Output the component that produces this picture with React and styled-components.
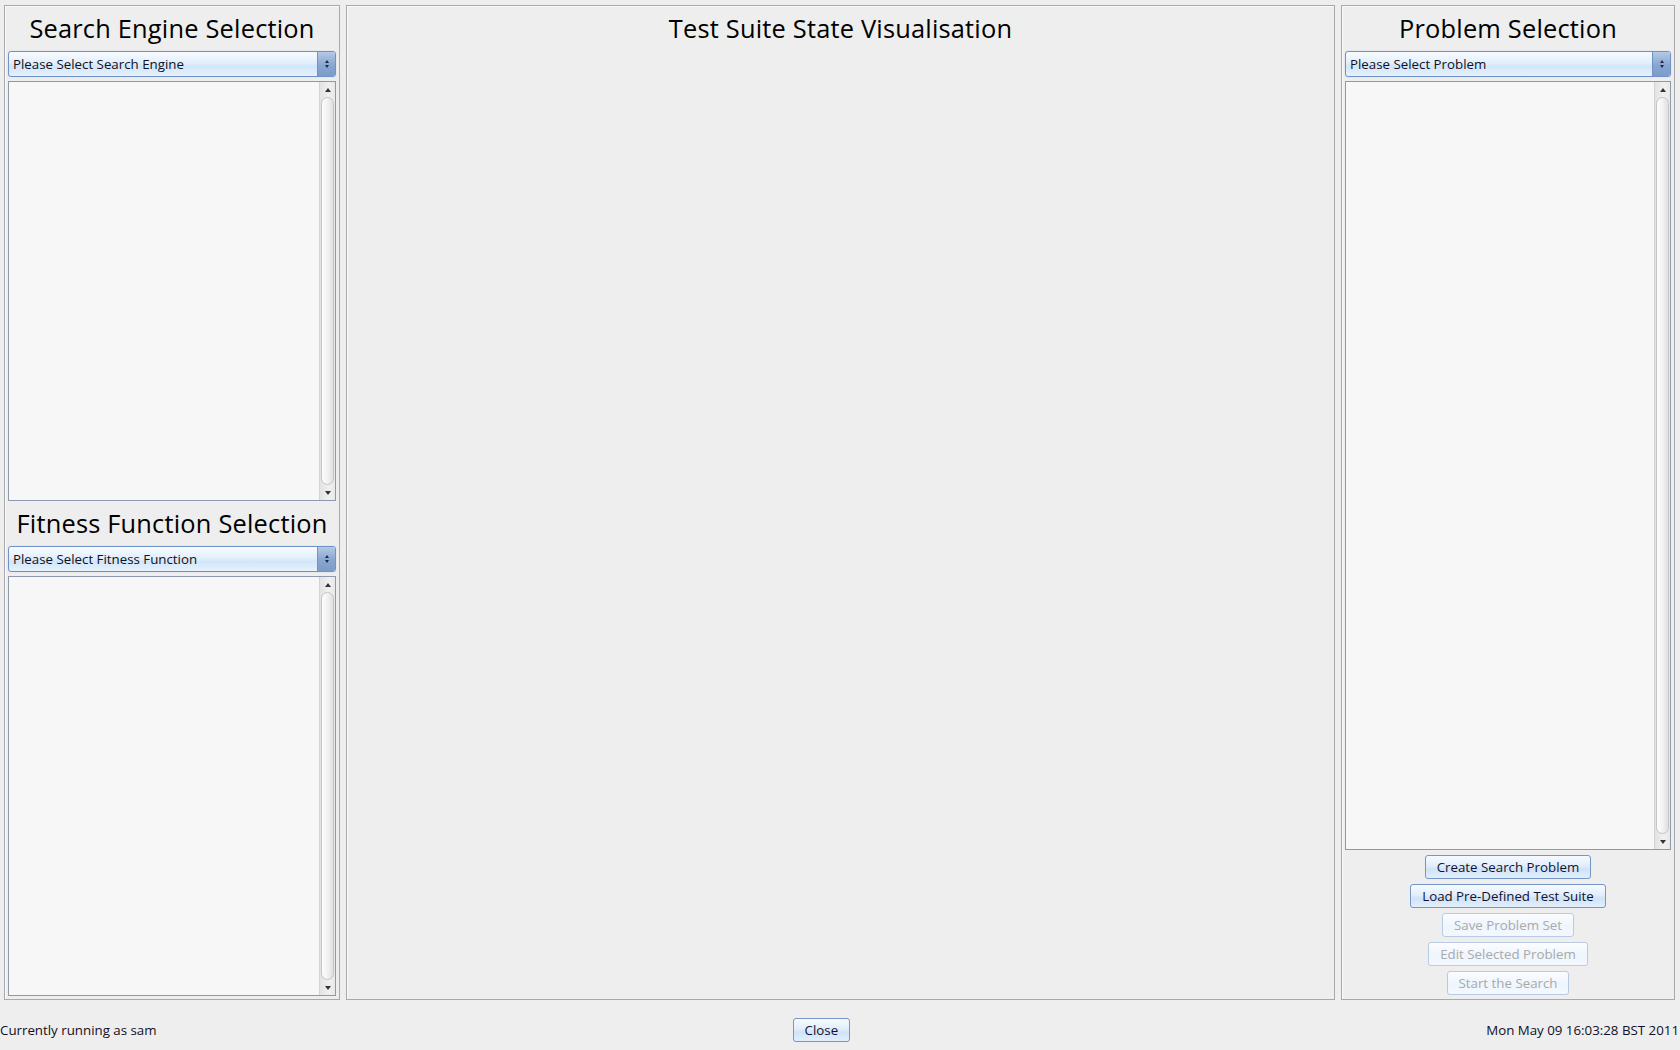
import React from "react";
import styled, { createGlobalStyle } from "styled-components";

const Global = createGlobalStyle`
  html, body {
    margin: 0;
    padding: 0;
    background: #eeeeee;
  }
  body {
    font-family: "Open Sans", "DejaVu Sans", sans-serif;
    color: #111;
  }
`;

const Page = styled.div`
  width: 1680px;
  height: 1050px;
  display: flex;
  flex-direction: column;
  box-sizing: border-box;
  padding: 5px 5px 0 4px;
`;

const Main = styled.div`
  display: flex;
  gap: 6px;
  height: 995px;
`;

const Panel = styled.div`
  display: flex;
  flex-direction: column;
  box-sizing: border-box;
  border: 1px solid #a9a9a9;
  box-shadow: inset 1px 1px 0 #fafafa;
  padding: 0 3px 3px 3px;
  width: ${(p) => (p.$grow ? "auto" : `${p.$w || 336}px`)};
  flex: ${(p) => (p.$grow ? "1" : "none")};
`;

const Section = styled.div`
  flex: 1;
  display: flex;
  flex-direction: column;
  min-height: 0;
`;

const Title = styled.div`
  height: 45px;
  line-height: 45px;
  text-align: center;
  font-size: 25.4px;
  color: #000;
  letter-spacing: 0.2px;
`;

const Combo = styled.div`
  height: 26px;
  display: flex;
  box-sizing: border-box;
  border: 1px solid #6f93c8;
  border-radius: 3px;
  background: linear-gradient(#f7fbff 0%, #e3effc 45%, #d2e6f9 60%, #e6f1fc 100%);
  box-shadow: 0 0 1px #9fb9de;
  margin-bottom: 4px;
  overflow: hidden;
`;

const ComboText = styled.div`
  flex: 1;
  padding-left: 4px;
  font-size: 13.3px;
  line-height: 25px;
  color: #101020;
`;

const ComboArrow = styled.div`
  width: 17px;
  border-left: 1px solid #6f93c8;
  background: linear-gradient(#b4c9e4, #88a6d0 55%, #7c9cc9);
  display: flex;
  flex-direction: column;
  align-items: center;
  justify-content: center;
  gap: 2px;
`;

const Tri = styled.span`
  width: 0;
  height: 0;
  border-left: ${(p) => p.$w || 3}px solid transparent;
  border-right: ${(p) => p.$w || 3}px solid transparent;
  ${(p) =>
    p.$down
      ? `border-top: ${p.$h || 3}px solid ${p.$c || "#1e2a44"};`
      : `border-bottom: ${p.$h || 3}px solid ${p.$c || "#1e2a44"};`}
`;

const List = styled.div`
  flex: 1;
  display: flex;
  box-sizing: border-box;
  border: 1px solid #8d99ad;
  background: #f7f7f7;
  min-height: 0;
`;

const ListBody = styled.div`
  flex: 1;
`;

const Scroll = styled.div`
  width: 15px;
  display: flex;
  flex-direction: column;
  background: linear-gradient(to right, #e3e3e3, #f0f0f0 60%, #e8e8e8);
  border-left: 1px solid #d3d3d3;
`;

const ScrollBtn = styled.div`
  height: 15px;
  display: flex;
  align-items: center;
  justify-content: center;
  flex: none;
`;

const Thumb = styled.div`
  flex: 1;
  margin: 0 1px;
  border: 1px solid #c4c4c4;
  border-radius: 7px;
  background: linear-gradient(to right, #fdfdfd, #f2f2f2 50%, #e0e0e0);
`;

const ButtonColumn = styled.div`
  display: flex;
  flex-direction: column;
  align-items: center;
  gap: 5px;
  padding: 5px 0 1px;
`;

const Button = styled.div`
  height: 24px;
  box-sizing: border-box;
  padding: 0 ${(p) => p.$pad || 11}px;
  border: 1px solid ${(p) => (p.$disabled ? "#b9cbe4" : "#7596c6")};
  border-radius: 3px;
  font-size: 13.3px;
  line-height: 22px;
  color: ${(p) => (p.$disabled ? "#a9a9a9" : "#121230")};
  background: ${(p) =>
    p.$disabled
      ? "linear-gradient(#fbfdff, #eef5fd 55%, #f4f8fe)"
      : "linear-gradient(#f6faff, #e2eefb 45%, #cfe3f8 60%, #e3effb)"};
  white-space: nowrap;
`;

const Footer = styled.div`
  flex: 1;
  display: flex;
  justify-content: space-between;
  align-items: center;
  padding: 10px 1px 0 0;
  margin: 0 -5px 0 -4px;
  font-size: 13.3px;
  color: #101028;
`;

function Scrollbar() {
  return (
    <Scroll>
      <ScrollBtn>
        <Tri $w={3} $h={4} $c="#333" />
      </ScrollBtn>
      <Thumb />
      <ScrollBtn>
        <Tri $down $w={3} $h={4} $c="#333" />
      </ScrollBtn>
    </Scroll>
  );
}

function Selector({ title, placeholder }) {
  return (
    <>
      <Title>{title}</Title>
      <Combo>
        <ComboText>{placeholder}</ComboText>
        <ComboArrow>
          <Tri $w={2.5} $h={3} />
          <Tri $down $w={2.5} $h={3} />
        </ComboArrow>
      </Combo>
      <List>
        <ListBody />
        <Scrollbar />
      </List>
    </>
  );
}

export default function App() {
  return (
    <Page>
      <Global />
      <Main>
        <Panel>
          <Section>
            <Selector title="Search Engine Selection" placeholder="Please Select Search Engine" />
          </Section>
          <Section>
            <Selector title="Fitness Function Selection" placeholder="Please Select Fitness Function" />
          </Section>
        </Panel>
        <Panel $grow>
          <Title>Test Suite State Visualisation</Title>
        </Panel>
        <Panel $w={334}>
          <Selector title="Problem Selection" placeholder="Please Select Problem" />
          <ButtonColumn>
            <Button $pad={11}>Create Search Problem</Button>
            <Button $pad={11}>Load Pre-Defined Test Suite</Button>
            <Button $pad={11} $disabled>Save Problem Set</Button>
            <Button $pad={11} $disabled>Edit Selected Problem</Button>
            <Button $pad={11} $disabled>Start the Search</Button>
          </ButtonColumn>
        </Panel>
      </Main>
      <Footer>
        <span>Currently running as sam</span>
        <Button $pad={11}>Close</Button>
        <span>Mon May 09 16:03:28 BST 2011</span>
      </Footer>
    </Page>
  );
}
